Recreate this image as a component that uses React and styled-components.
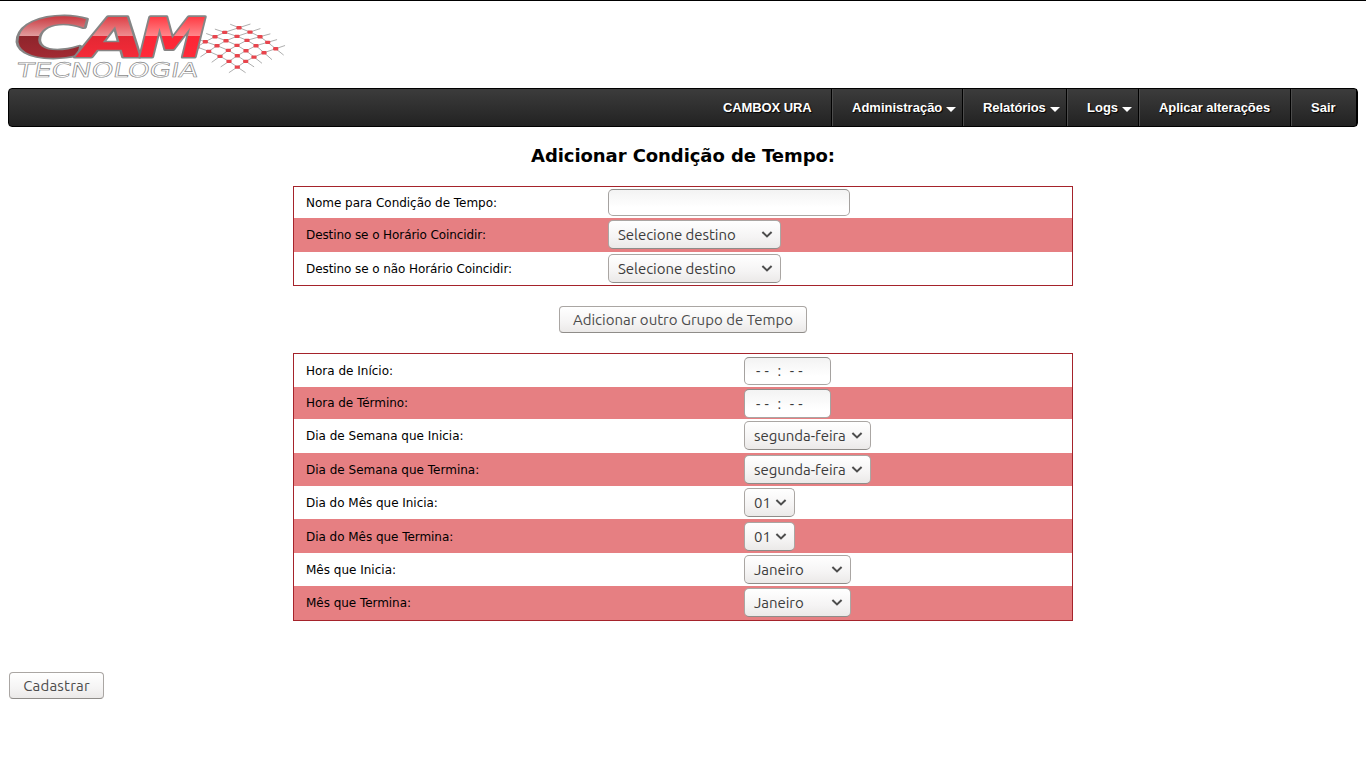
import React from 'react';
import styled, { createGlobalStyle } from 'styled-components';

const GlobalStyle = createGlobalStyle`
  * { box-sizing: border-box; }
  body {
    margin: 0;
    background: #fff;
    color: #000;
    font-family: "DejaVu Sans", sans-serif;
    font-size: 12px;
  }
`;

const Page = styled.div`
  display: flex;
  flex-direction: column;
  height: 768px;
  overflow: hidden;
  padding: 0 8px;
  border-top: 1px solid #000;
`;

const Header = styled.header`
  height: 87px;
  flex: none;
  svg { display: block; overflow: visible; }
`;

const Nav = styled.nav`
  display: flex;
  justify-content: flex-end;
  flex: none;
  height: 39px;
  border: 1px solid #000;
  border-radius: 4px;
  background: linear-gradient(#3c3c3c, #222);
`;

const NavItem = styled.a`
  display: flex;
  align-items: center;
  width: ${(p) => p.$width}px;
  padding-left: ${(p) => (p.$first ? 20 : 19)}px;
  border-left: ${(p) => (p.$first ? 0 : 1)}px solid #4c4c4c;
  border-right: 1px solid #000;
  color: #fff;
  font: bold 13px/36px "Liberation Sans", Arial, sans-serif;
  text-shadow: 1px 1px 1px #000;
  white-space: nowrap;
`;

const NavText = styled.span`
  letter-spacing: ${(p) => p.$spacing || 0}px;
`;

const NavArrow = styled.span`
  width: 10px;
  margin: 3px 0 0 4px;
  border: 5px solid transparent;
  border-top-color: #fff;
  border-bottom: 0;
`;

const Title = styled.h1`
  flex: none;
  height: 59px;
  margin: 0;
  padding-top: 18px;
  font-size: 18px;
  line-height: 21px;
  letter-spacing: -0.07px;
  text-align: center;
`;

const Panel = styled.section`
  flex: none;
  align-self: center;
  width: 780px;
  border: 1px solid #a5232b;
`;

const Row = styled.div`
  display: flex;
  align-items: flex-start;
  height: ${(p) => p.$height}px;
  padding-top: ${(p) => p.$top}px;
  background: ${(p) => (p.$red ? '#e67f82' : '#fff')};
`;

const Label = styled.label`
  width: ${(p) => p.$width}px;
  padding-left: 12px;
  line-height: 15px;
  margin-top: ${(p) => p.$top}px;
  letter-spacing: ${(p) => p.$spacing || 0}px;
`;

const Control = styled.div`
  display: flex;
  align-items: center;
  justify-content: space-between;
  width: ${(p) => p.$width}px;
  height: 29px;
  padding: 1px 7px 0 9px;
  border: 1px solid #aaa6a3;
  border-bottom-color: #8f8c89;
  border-radius: 5px;
  background: linear-gradient(#fff, #f5f4f4 60%, #ebe9e8);
  color: #3c3c3c;
  font: 15px/20px Ubuntu, "Noto Sans", sans-serif;
  letter-spacing: -0.05px;
  white-space: nowrap;
`;

const Caret = styled.svg`
  display: block;
  margin-top: -2px;
`;

const Field = styled(Control)`
  height: ${(p) => p.$height}px;
  padding: 0 0 0 11px;
  border-color: #8f8c89 #a5a2a0 #aaa6a3;
  background: linear-gradient(#f3f3f3, #fff 70%);
  white-space: pre;
  word-spacing: 0.9px;
`;

const Button = styled.button`
  width: ${(p) => p.$width}px;
  height: 27px;
  padding: 1px 0 0;
  border: 1px solid #aaa6a3;
  border-bottom-color: #8f8c89;
  border-radius: 4px;
  background: linear-gradient(#fff, #f5f4f4 60%, #ebe9e8);
  color: #4c4c4c;
  font: 15px/20px Ubuntu, "Noto Sans", sans-serif;
  letter-spacing: ${(p) => p.$spacing || 0}px;
  white-space: nowrap;
`;

const Center = styled.div`
  display: flex;
  justify-content: center;
  flex: none;
  padding: 20px 0;
`;

const Submit = styled.div`
  flex: none;
  padding: 51px 0 0 1px;
`;

const LogoLetter = styled.text`
  font: bold 55px "DejaVu Sans", sans-serif;
  paint-order: stroke;
  stroke: #858585;
  stroke-width: 3.2px;
  stroke-linejoin: round;
`;

const MESH = [
  [[239, 27.7], [250, 32], [260, 36.7], [267.7, 42.3], [275.7, 48.7]],
  [[224.7, 32.3], [237, 36.3], [247, 40.3], [256, 45.7], [264, 52.7]],
  [[215, 36.7], [226, 40.7], [237, 45.3], [246, 50.7], [254, 57]],
  [[205.3, 41.7], [217, 45.7], [228.3, 50.3], [237.3, 55.7], [245.7, 61.3]],
  [[197, 47], [208.7, 51.3], [220, 56.3], [229, 61.3], [237.3, 67]],
];

function extend(points) {
  const [a, b] = points;
  const [y, z] = points.slice(-2);
  return [
    [a[0] - (b[0] - a[0]) * 0.8, a[1] - (b[1] - a[1]) * 0.8],
    ...points,
    [z[0] + (z[0] - y[0]), z[1] + (z[1] - y[1])],
  ].map((p) => p.join(',')).join(' ');
}

const LETTERS = [
  { char: 'C', x: 9, width: 74, top: '#c8333a', mid: '#e19a9c', low: '#8e242b', end: '#a12a32' },
  { char: 'A', x: 75, width: 65, top: '#dd3a41', mid: '#ee8b8e', low: '#e32733', end: '#f42b39' },
  { char: 'M', x: 134, width: 67, top: '#ff343d', mid: '#ff8589', low: '#fc2635', end: '#ff2b3a' },
];

function Logo() {
  const columns = MESH[0].map((_, i) => MESH.map((row) => row[i]));
  return (
    <svg width="284" height="87" viewBox="8 1 284 87">
      <defs>
        {LETTERS.map((l) => (
          <linearGradient key={l.char} id={`fill${l.char}`} gradientUnits="userSpaceOnUse" x1="0" y1="-42" x2="0" y2="0">
            <stop offset="0" stopColor={l.top} />
            <stop offset=".49" stopColor={l.mid} />
            <stop offset=".5" stopColor={l.low} />
            <stop offset="1" stopColor={l.end} />
          </linearGradient>
        ))}
      </defs>
      <g fill="none" stroke="#777" strokeWidth=".6">
        {[...MESH, ...columns].map((line, i) => <polyline key={i} points={extend(line)} />)}
      </g>
      <g fill="#e8454d">
        {MESH.flat().map(([x, y]) => (
          <rect key={`${x}-${y}`} x={x - 2.6} y={y - 1.6} width="5.2" height="3.3" rx="1" />
        ))}
      </g>
      {LETTERS.map((l) => (
        <LogoLetter
          key={l.char}
          transform={`translate(${l.x} 57) skewX(-14)`}
          fill={`url(#fill${l.char})`}
          textLength={l.width}
          lengthAdjust="spacingAndGlyphs"
        >{l.char}</LogoLetter>
      ))}
      <text
        transform="translate(16 77) skewX(-10)"
        fontFamily="DejaVu Sans, sans-serif"
        fontSize="20"
        fill="#fff"
        stroke="#8a8a8a"
        strokeWidth=".6"
        textLength="181"
        lengthAdjust="spacingAndGlyphs"
      >TECNOLOGIA</text>
    </svg>
  );
}

function Select({ width, children }) {
  return (
    <Control $width={width}>
      <span>{children}</span>
      <Caret width="12" height="7" viewBox="0 0 12 7">
        <path d="M1.4 1 6 5.4 10.6 1" fill="none" stroke="#4d4d4d" strokeWidth="2" />
      </Caret>
    </Control>
  );
}

const SCHEDULE = [
  { label: 'Hora de Início:', height: 33, top: 3, text: 7, time: true, field: 28 },
  { label: 'Hora de Término:', height: 32, top: 2, text: 7, time: true, field: 29, spacing: -0.04 },
  { label: 'Dia de Semana que Inicia:', height: 34, top: 2, text: 8, value: 'segunda-feira', width: 127 },
  { label: 'Dia de Semana que Termina:', height: 33, top: 2, text: 8, value: 'segunda-feira', width: 127 },
  { label: 'Dia do Mês que Inicia:', height: 33, top: 2, text: 8, value: '01', width: 51, spacing: -0.03 },
  { label: 'Dia do Mês que Termina:', height: 34, top: 3, text: 8, value: '01', width: 51, spacing: -0.04 },
  { label: 'Mês que Inicia:', height: 33, top: 2, text: 8, value: 'Janeiro', width: 107 },
  { label: 'Mês que Termina:', height: 34, top: 2, text: 8, value: 'Janeiro', width: 107, spacing: -0.04 },
];

export default function App() {
  return (
    <>
      <GlobalStyle />
      <Page>
        <Header><Logo /></Header>
        <Nav>
          <NavItem $first $width={129}><NavText $spacing={-0.1}>CAMBOX URA</NavText></NavItem>
          <NavItem $width={131}><NavText>Administração</NavText><NavArrow /></NavItem>
          <NavItem $width={104}><NavText $spacing={-0.08}>Relatórios</NavText><NavArrow /></NavItem>
          <NavItem $width={72}><NavText>Logs</NavText><NavArrow /></NavItem>
          <NavItem $width={152}><NavText $spacing={-0.05}>Aplicar alterações</NavText></NavItem>
          <NavItem $width={66}><NavText>Sair</NavText></NavItem>
        </Nav>
        <Title>Adicionar Condição de Tempo:</Title>
        <Panel>
          <Row $height={31} $top={2}>
            <Label $width={314} $top={7} $spacing={-0.03}>Nome para Condição de Tempo:</Label>
            <Field $width={242} $height={27} />
          </Row>
          <Row $height={34} $top={2} $red>
            <Label $width={314} $top={8} $spacing={-0.09}>Destino se o Horário Coincidir:</Label>
            <Select width={173}>Selecione destino</Select>
          </Row>
          <Row $height={33} $top={2}>
            <Label $width={314} $top={8} $spacing={-0.08}>Destino se o não Horário Coincidir:</Label>
            <Select width={173}>Selecione destino</Select>
          </Row>
        </Panel>
        <Center><Button $width={248}>Adicionar outro Grupo de Tempo</Button></Center>
        <Panel>
          {SCHEDULE.map((r, i) => (
            <Row key={r.label} $height={r.height} $top={r.top} $red={i % 2 === 1}>
              <Label $width={450} $top={r.text} $spacing={r.spacing}>{r.label}</Label>
              {r.time
                ? <Field $width={87} $height={r.field}>{'- -  :  - -'}</Field>
                : <Select width={r.width}>{r.value}</Select>}
            </Row>
          ))}
        </Panel>
        <Submit><Button $width={95} $spacing={0.2}>Cadastrar</Button></Submit>
      </Page>
    </>
  );
}
